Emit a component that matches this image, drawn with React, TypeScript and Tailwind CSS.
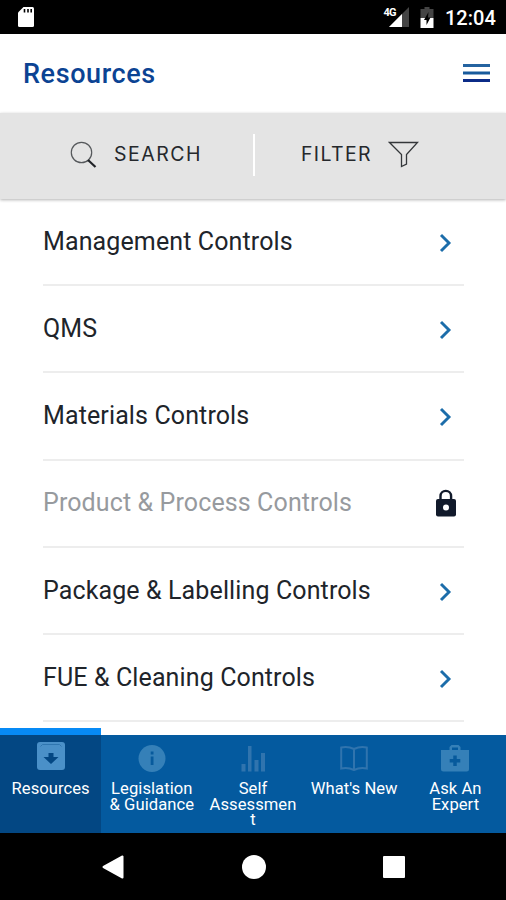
const resources = [
  { title: "Management Controls" },
  { title: "QMS" },
  { title: "Materials Controls" },
  { title: "Product & Process Controls", locked: true },
  { title: "Package & Labelling Controls" },
  { title: "FUE & Cleaning Controls" },
];

function StatusBar() {
  return (
    <div className="flex h-[34px] shrink-0 items-center bg-black text-white">
      <svg className="ml-[17px] h-[22px] w-[18px]" viewBox="0 0 18 22">
        <path d="M6.500 1H15.500Q17 1 17 2.500V19.500Q17 21 15.500 21H2.500Q1 21 1 19.500V6.500Z" fill="white" />
        <path d="M7.500 3V6.500M11 3V6.500M14.200 3V6.500" stroke="black" strokeWidth="1.600" />
      </svg>
      <div className="ml-auto flex items-center">
        <svg className="h-[24px] w-[28px]" viewBox="0 0 28 24">
          <path d="M26 2V22H6Z" fill="#444" />
          <path d="M19 9V22H6Z" fill="white" />
          <path d="M0 0H14V11H0Z" fill="black" />
          <text x="0.5" y="10.500" fontFamily="Roboto" fontWeight="700" fontSize="11" fill="white" textLength="13">4G</text>
        </svg>
        <svg className="ml-[9px] h-[22px] w-[14px]" viewBox="0 0 14 22">
          <path d="M4.500 1H9.500V3H13.500V12H.5V3H4.500Z" fill="#444" />
          <path d="M.5 12H13.500V22H.5Z" fill="white" />
          <path d="M8.500 6L4 14H6.500V19L10.500 11.500H8Z" fill="black" />
        </svg>
        <span className="mr-[11px] ml-[11px] w-[50px] pt-[1px] text-[20px] leading-none font-medium whitespace-nowrap">12:04</span>
      </div>
    </div>
  );
}

function Header() {
  return (
    <header className="flex h-[79px] shrink-0 items-center justify-between pr-[16px] pl-[23px]">
      <h1 className="pt-[2px] text-[27px] font-medium tracking-[0.6px] text-[#0b4393]">Resources</h1>
      <svg className="h-[20px] w-[27px]" viewBox="0 0 27 20">
        <path d="M0 1.500H27" stroke="#2463a0" strokeWidth="3" />
        <path d="M0 9H27" stroke="#175a9c" strokeWidth="3" />
        <path d="M0 16.500H27" stroke="#0b2b87" strokeWidth="3" />
      </svg>
    </header>
  );
}

function Toolbar() {
  return (
    <div className="z-10 flex h-[86px] shrink-0 items-center bg-[#e4e4e4] pb-[2px] font-['Inter',sans-serif] text-[19.500px] text-[#25282c] shadow-[0_1px_3px_rgba(0,0,0,0.3)]">
      <div className="flex w-[253px] items-center pl-[70px]">
        <svg className="h-[28px] w-[28px]" viewBox="0 0 28 28" fill="none">
          <circle cx="11.500" cy="11.500" r="10.200" stroke="#55585b" strokeWidth="1.200" />
          <path d="M18 19L25.500 26" stroke="#202327" strokeWidth="2.200" />
        </svg>
        <span className="ml-[16px] tracking-[1.500px]">SEARCH</span>
      </div>
      <div className="h-[42px] w-[2px] bg-white" />
      <div className="flex items-center pl-[46px]">
        <span className="tracking-[1.350px]">FILTER</span>
        <svg className="ml-[16px] h-[28px] w-[31px]" viewBox="0 0 31 28" fill="none" stroke="#34373a" strokeWidth="1.300">
          <path d="M1.500 1.500H29.500L18.500 13.500V23L13.500 25.500V13.500Z" />
        </svg>
      </div>
    </div>
  );
}

function ResourceList() {
  return (
    <ul className="min-h-0 flex-1 overflow-hidden pr-[42px] pl-[43px]">
      {resources.map((item) => (
        <li
          key={item.title}
          className="flex h-[87.200px] items-center justify-between border-b-2 border-[#ededed]"
        >
          <span
            className={
              item.locked
                ? "text-[25px] tracking-[0.12px] whitespace-nowrap text-[#979a9e]"
                : "text-[25px] tracking-[0.12px] whitespace-nowrap text-[#20242a]"
            }
          >
            {item.title}
          </span>
          {item.locked ? (
            <svg className="mr-[7px] h-[28px] w-[22px]" viewBox="0 0 22 28">
              <path d="M5.500 11V7.200a5.300 5.300 0 0 1 10.600 0V11" fill="none" stroke="#111a2b" strokeWidth="2.400" />
              <rect x="1" y="10" width="20" height="17.500" rx="2" fill="#111a2b" />
              <circle cx="11" cy="18.500" r="3" fill="white" />
            </svg>
          ) : (
            <svg className="mt-[3px] mr-[12px] h-[20px] w-[13px]" viewBox="0 0 13 20">
              <path d="M2 2L10 10L2 18" fill="none" stroke="#1c6daa" strokeWidth="2.900" />
            </svg>
          )}
        </li>
      ))}
    </ul>
  );
}

const tabs = [
  {
    label: "Resources",
    icon: (
      <>
        <rect width="28" height="28" rx="3" fill="#4a90c8" />
        <path d="M3.500 4.500L5.500 2.500H22.500L24.500 4.500" fill="none" stroke="#2f76b0" />
        <path d="M11.500 11H16.500V15H21.500L14 22L6.500 15H11.500Z" fill="#034783" />
      </>
    ),
  },
  {
    label: "Legislation\n& Guidance",
    icon: (
      <>
        <circle cx="14" cy="16.500" r="13.500" fill="#3580b8" />
        <path d="M12.700 9.500H15.500V12.500H12.700Z M12.700 14.500H15.500V23H12.700Z" fill="#075a9c" />
      </>
    ),
  },
  {
    label: "Self\nAssessmen\nt",
    icon: (
      <path d="M2.500 22H6.500V29.500H2.500Z M9 4H12.500V29.500H9Z M15.500 18H19.500V29.500H15.500Z M22 11H26V29.500H22Z" fill="#3074ae" />
    ),
  },
  {
    label: "What's New",
    icon: (
      <path d="M14 7Q8 4 1.200 5.500V26.500Q8 25 14 28Q20 25 26.800 26.500V5.500Q20 4 14 7V28" fill="none" stroke="#3074ae" strokeWidth="2" />
    ),
  },
  {
    label: "Ask An\nExpert",
    icon: (
      <>
        <path fillRule="evenodd" d="M8.500 8V5L10.500 3H17.500L19.500 5V8H28V27Q28 29.500 25.500 29.500H2.500Q0 29.500 0 27V8Z M11 8H17V5.500H11Z" fill="#3580b8" />
        <path d="M14 13.500V24M8.700 18.700H19.300" stroke="#075a9c" strokeWidth="3.500" />
      </>
    ),
  },
];

function TabBar() {
  return (
    <nav className="flex h-[105px] shrink-0">
      {tabs.map((tab, index) => (
        <div
          key={tab.label}
          className={
            index === 0
              ? "flex flex-1 flex-col items-center border-t-[7px] border-[#078af5] bg-[#034783]"
              : "mt-[7px] flex flex-1 flex-col items-center bg-[#045a9f]"
          }
        >
          <svg className="mt-[7px] h-[31px] w-[28px]" viewBox="0 0 28 31">
            {tab.icon}
          </svg>
          <div className="mt-[8px] text-center text-[16.600px] leading-[15.500px] font-[450] tracking-[0.05px] whitespace-pre text-white">
            {tab.label}
          </div>
        </div>
      ))}
    </nav>
  );
}

function SystemNav() {
  return (
    <div className="flex h-[67px] shrink-0 items-center justify-between bg-black pr-[101px] pl-[102px]">
      <svg className="h-[24px] w-[22px]" viewBox="0 0 22 24">
        <path d="M20.500 1.500V22.500L1.500 12Z" fill="white" stroke="white" strokeLinejoin="round" strokeWidth="2" />
      </svg>
      <div className="h-[24px] w-[24px] rounded-full bg-white" />
      <div className="h-[22px] w-[22px] rounded-[1px] bg-white" />
    </div>
  );
}

export default function App() {
  return (
    <div className="flex h-[900px] w-[506px] flex-col overflow-hidden bg-white font-['Roboto',sans-serif]">
      <StatusBar />
      <Header />
      <Toolbar />
      <ResourceList />
      <TabBar />
      <SystemNav />
    </div>
  );
}
